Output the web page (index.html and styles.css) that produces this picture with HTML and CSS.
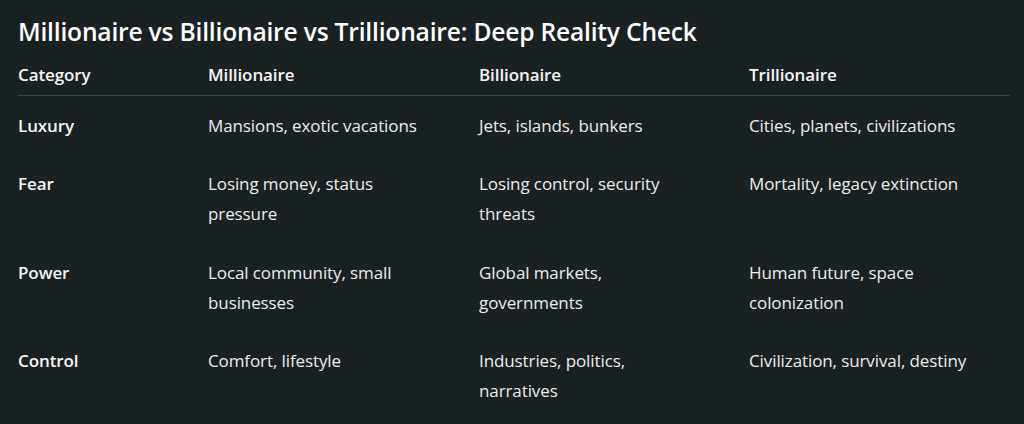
FILE: index.html
```html
<!DOCTYPE html>
<html>
<head>
<meta charset="utf-8">
<link rel="stylesheet" href="styles.css">
</head>
<body>
<main class="page">
  <h1 class="title">Millionaire vs Billionaire vs Trillionaire: Deep Reality Check</h1>
  <div class="table">
    <div class="cell head">Category</div>
    <div class="cell head">Millionaire</div>
    <div class="cell head">Billionaire</div>
    <div class="cell head">Trillionaire</div>

    <div class="cell cat">Luxury</div>
    <div class="cell"><span class="t c2">Mansions, exotic vacations</span></div>
    <div class="cell"><span class="t c3">Jets, islands, bunkers</span></div>
    <div class="cell"><span class="t c4">Cities, planets, civilizations</span></div>

    <div class="cell cat">Fear</div>
    <div class="cell"><span class="t c2">Losing money, status pressure</span></div>
    <div class="cell"><span class="t c3">Losing control, security threats</span></div>
    <div class="cell"><span class="t c4">Mortality, legacy extinction</span></div>

    <div class="cell cat">Power</div>
    <div class="cell"><span class="t c2">Local community, small businesses</span></div>
    <div class="cell"><span class="t c3">Global markets, governments</span></div>
    <div class="cell"><span class="t c4">Human future, space colonization</span></div>

    <div class="cell cat">Control</div>
    <div class="cell"><span class="t c2">Comfort, lifestyle</span></div>
    <div class="cell"><span class="t c3">Industries, politics, narratives</span></div>
    <div class="cell"><span class="t c4">Civilization, survival, destiny</span></div>
  </div>
</main>
</body>
</html>
```

FILE: styles.css
```css
html, body {
  margin: 0;
  padding: 0;
  background: #1a2123;
}
.page {
  width: 1024px;
  height: 424px;
  box-sizing: border-box;
  padding: 16px 14px 0 18px;
  font-family: "Open Sans", "Noto Sans", sans-serif;
  color: #ececec;
  overflow: hidden;
}
.title {
  margin: 0;
  font-size: 24.6px;
  line-height: 32px;
  font-weight: 600;
  color: #ffffff;
  letter-spacing: -0.2px;
}
.table {
  margin-top: 12px;
  display: grid;
  grid-template-columns: 190px 271px 270px 1fr;
}
.cell {
  font-size: 17px;
  line-height: 30px;
  padding: 14.5px 0 14px;
  letter-spacing: -0.1px;
}
.head {
  font-weight: 600;
  padding: 0 0 5px 0;
  border-bottom: 1px solid #3a4547;
  color: #f4f4f4;
}
.cat {
  font-weight: 600;
  color: #f4f4f4;
}
.t { display: block; }
.c2 { max-width: 226px; }
.c3 { max-width: 215px; }
.c4 { max-width: 240px; }
```
